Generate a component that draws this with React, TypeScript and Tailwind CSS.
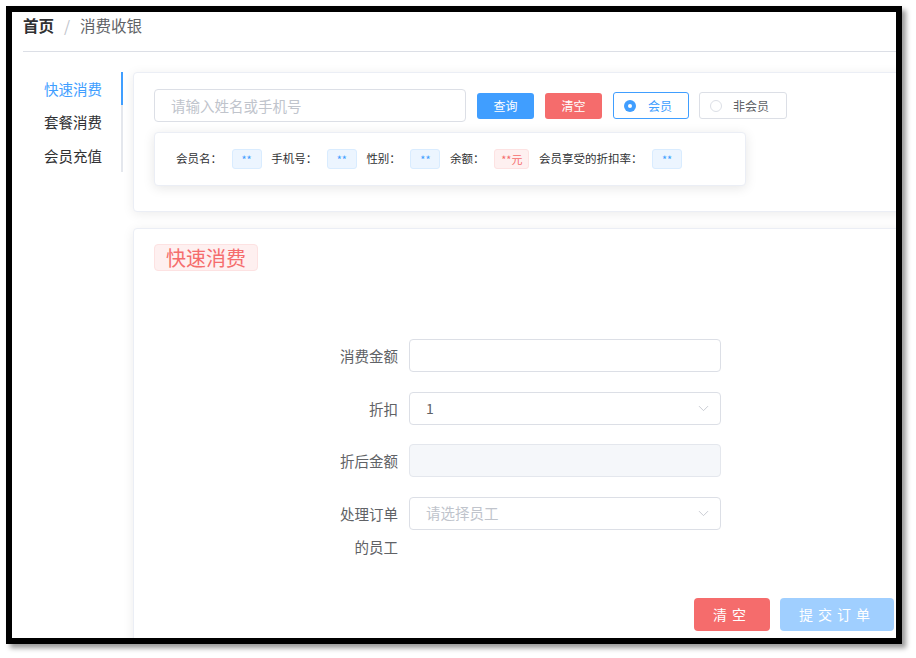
import { ChevronDown } from "lucide-react";

const font = {
  fontFamily: '"Noto Sans CJK SC", "Noto Sans", "Liberation Sans", sans-serif',
};

const menuItems = [
  { label: "快速消费", active: true, h: "h-[33px]" },
  { label: "套餐消费", active: false, h: "h-[34px]" },
  { label: "会员充值", active: false, h: "h-[33px]" },
];

const InfoTag = ({ text, red }: { text: string; red?: boolean }) => (
  <span
    className={
      red
        ? "flex h-[20px] items-center rounded-[3px] border border-[#fde2e2] bg-[#fef0f0] px-[6px] text-[11px] text-[#f56c6c]"
        : "flex h-[20px] w-[30px] items-center justify-center rounded-[3px] border border-[#d9ecff] bg-[#ecf5ff] text-[11px] text-[#409eff]"
    }
  >
    {text}
  </span>
);

const FormRow = ({
  label,
  children,
}: {
  label: string;
  children: React.ReactNode;
}) => (
  <div className="mb-[19.5px] flex">
    <div className="w-[70px] shrink-0 pr-[11px] text-right text-[14.5px] leading-[33px] text-[#606266]">
      {label}
    </div>
    {children}
  </div>
);

export default function App() {
  return (
    <div style={font} className="h-[658px] w-[916px] bg-white">
      <div className="ml-[6px] mt-[6px] h-[638px] w-[896px] border-[6px] border-black shadow-[4px_4px_5px_rgba(0,0,0,0.4)]">
        <div className="h-full w-full overflow-hidden bg-white">
          {/* breadcrumb */}
          <div className="ml-[11px] flex h-[40px] items-start border-b border-[#dcdfe6] pt-[4px] text-[15.5px] leading-[18px]">
            <span className="font-bold text-[#303133]">首页</span>
            <span className="mx-[10px] text-[#c0c4cc]">/</span>
            <span className="text-[#606266]">消费收银</span>
          </div>

          <div className="flex pt-[20px]">
            {/* side menu */}
            <div className="ml-[11px] w-[100px] shrink-0 self-start border-r-2 border-[#e4e7ed]">
              {menuItems.map((item) => (
                <div
                  key={item.label}
                  className={`${item.h} -mr-[2px] flex items-center border-r-2 pl-[21px] text-[14.5px] ${
                    item.active
                      ? "border-[#409eff] text-[#409eff]"
                      : "border-transparent text-[#303133]"
                  }`}
                >
                  {item.label}
                </div>
              ))}
            </div>

            <div className="ml-[10px] flex w-[800px] shrink-0 flex-col gap-[16px]">
              {/* search card */}
              <div className="h-[140px] rounded-[4px] border border-[#ebeef5] bg-white px-[20px] pt-[16px] shadow-[0_2px_12px_rgba(0,0,0,0.08)]">
                <div className="flex items-center">
                  <div className="flex h-[33px] w-[312px] items-center rounded-[4px] border border-[#dcdfe6] px-[16px] text-[14.5px] text-[#c0c4cc]">
                    请输入姓名或手机号
                  </div>
                  <button className="ml-[11px] h-[26px] w-[57px] rounded-[3px] bg-[#409eff] text-[12px] text-white">
                    查询
                  </button>
                  <button className="ml-[11px] h-[26px] w-[57px] rounded-[3px] bg-[#f56c6c] text-[12px] text-white">
                    清空
                  </button>
                  <div className="ml-[11px] flex h-[27px] w-[76px] items-center rounded-[3px] border border-[#409eff] pl-[10px] text-[12px] text-[#409eff]">
                    <span className="flex h-[12px] w-[12px] items-center justify-center rounded-full bg-[#409eff]">
                      <span className="h-[4px] w-[4px] rounded-full bg-white" />
                    </span>
                    <span className="ml-[12px]">会员</span>
                  </div>
                  <div className="ml-[10px] flex h-[27px] w-[88px] items-center rounded-[3px] border border-[#dcdfe6] pl-[10px] text-[12px] text-[#606266]">
                    <span className="h-[12px] w-[12px] rounded-full border border-[#dcdfe6]" />
                    <span className="ml-[11px]">非会员</span>
                  </div>
                </div>

                <div className="mt-[10px] flex h-[54px] w-[592px] items-center gap-[9.6px] rounded-[4px] border border-[#ebeef5] bg-white pl-[21px] text-[11.5px] text-[#303133] shadow-[0_2px_12px_rgba(0,0,0,0.1)]">
                  <span>会员名：</span>
                  <InfoTag text="**" />
                  <span>手机号：</span>
                  <InfoTag text="**" />
                  <span>性别：</span>
                  <InfoTag text="**" />
                  <span>余额：</span>
                  <InfoTag text="**元" red />
                  <span>会员享受的折扣率：</span>
                  <InfoTag text="**" />
                </div>
              </div>

              {/* quick consume card */}
              <div className="h-[420px] rounded-[4px] border border-[#ebeef5] bg-white px-[20px] pt-[15px] shadow-[0_2px_12px_rgba(0,0,0,0.08)]">
                <span className="inline-flex h-[27px] items-center rounded-[4px] border border-[#fde2e2] bg-[#fef0f0] px-[11px] text-[20px] text-[#f56c6c]">
                  快速消费
                </span>

                <div className="ml-[185px] mt-[68px]">
                  <FormRow label="消费金额">
                    <div className="h-[33px] w-[312px] rounded-[4px] border border-[#dcdfe6]" />
                  </FormRow>
                  <FormRow label="折扣">
                    <div className="flex h-[33px] w-[312px] items-center justify-between rounded-[4px] border border-[#dcdfe6] pl-[16px] pr-[8px] text-[14px] text-[#606266]">
                      <span>1</span>
                      <ChevronDown size={17} strokeWidth={1.2} color="#c0c4cc" />
                    </div>
                  </FormRow>
                  <FormRow label="折后金额">
                    <div className="h-[33px] w-[312px] rounded-[4px] border border-[#e4e7ed] bg-[#f5f7fa]" />
                  </FormRow>
                  <FormRow label="处理订单的员工">
                    <div className="flex h-[33px] w-[312px] items-center justify-between rounded-[4px] border border-[#dcdfe6] pl-[16px] pr-[8px] text-[14.5px] text-[#c0c4cc]">
                      <span>请选择员工</span>
                      <ChevronDown size={17} strokeWidth={1.2} color="#c0c4cc" />
                    </div>
                  </FormRow>
                </div>

                <div className="ml-[540px] mt-[35px] flex gap-[10px]">
                  <button className="h-[33px] w-[76px] rounded-[4px] bg-[#f56c6c] text-[14px] tracking-[5px] text-white">
                    清空
                  </button>
                  <button className="h-[33px] w-[114px] rounded-[4px] bg-[#a0cfff] text-[14px] tracking-[5px] text-white">
                    提交订单
                  </button>
                </div>
              </div>
            </div>
          </div>
        </div>
      </div>
    </div>
  );
}
